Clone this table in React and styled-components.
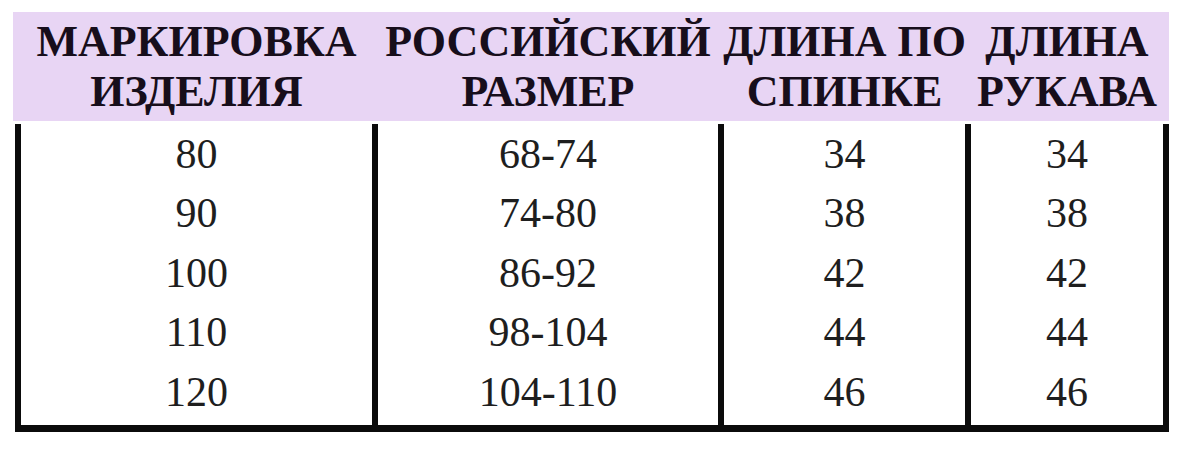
import React from "react";
import styled, { createGlobalStyle } from "styled-components";

const GlobalStyle = createGlobalStyle`
  html, body {
    margin: 0;
    padding: 0;
    background: #ffffff;
  }
  body {
    font-family: "Liberation Serif", "Times New Roman", serif;
  }
`;

const Page = styled.div`
  width: 1184px;
  height: 452px;
  box-sizing: border-box;
  padding: 12px 0 0 15px;
  background: #ffffff;
  overflow: hidden;
`;

const Table = styled.div`
  width: 1154px;
  display: flex;
  flex-direction: column;
`;

const COLS = "357px 346px 247px 204px";

const HeaderRow = styled.div`
  display: grid;
  grid-template-columns: 357px 346px 247px 198px;
  margin-left: -2px;
  padding: 5px 0 4px 2px;
  background: #e8d5f4;
`;

const HeaderCell = styled.div`
  display: flex;
  flex-direction: column;
  align-items: center;
  padding-left: 6px;
  min-width: 0;
  font-family: "Liberation Serif", "Times New Roman", serif;
  font-weight: 700;
  font-size: 44px;
  line-height: 50px;
  color: #170e1b;
  white-space: nowrap;
`;

const HeaderLine = styled.span`
  display: block;
`;

const Body = styled.div`
  display: grid;
  grid-template-columns: ${COLS};
  margin-top: 3px;
  border-bottom: 7px solid #0b0b0b;
`;

const Column = styled.div`
  display: flex;
  flex-direction: column;
  align-items: center;
  padding: 0.5px 0 3px;
  border-left: 6px solid #0b0b0b;
  border-right: ${(p) => (p.$last ? "6px solid #0b0b0b" : "none")};
`;

const Value = styled.span`
  font-family: "Liberation Serif", "Times New Roman", serif;
  font-size: 42px;
  line-height: 59.5px;
  color: #1e1e1e;
`;

const headers = [
  ["МАРКИРОВКА", "ИЗДЕЛИЯ"],
  ["РОССИЙСКИЙ", "РАЗМЕР"],
  ["ДЛИНА ПО", "СПИНКЕ"],
  ["ДЛИНА", "РУКАВА"],
];

const rows = [
  ["80", "68-74", "34", "34"],
  ["90", "74-80", "38", "38"],
  ["100", "86-92", "42", "42"],
  ["110", "98-104", "44", "44"],
  ["120", "104-110", "46", "46"],
];

export default function App() {
  return (
    <Page>
      <GlobalStyle />
      <Table>
        <HeaderRow>
          {headers.map((h, i) => (
            <HeaderCell key={i}>
              {h.map((line) => (
                <HeaderLine key={line}>{line}</HeaderLine>
              ))}
            </HeaderCell>
          ))}
        </HeaderRow>
        <Body>
          {headers.map((_, c) => (
            <Column key={c} $last={c === headers.length - 1}>
              {rows.map((r, i) => (
                <Value key={i}>{r[c]}</Value>
              ))}
            </Column>
          ))}
        </Body>
      </Table>
    </Page>
  );
}
